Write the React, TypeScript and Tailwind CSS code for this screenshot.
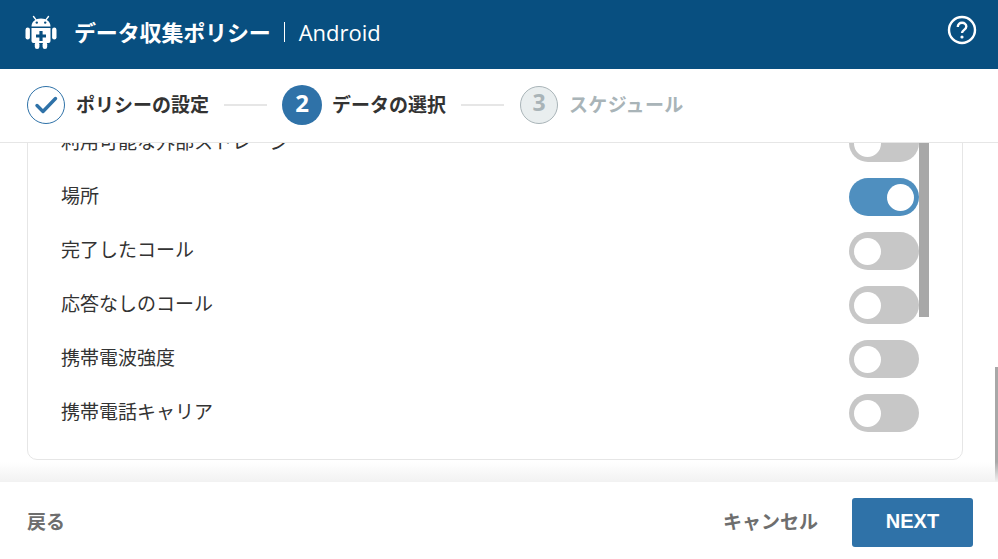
const jp = 'font-["Noto_Sans_CJK_JP","Open_Sans",sans-serif]'

const rows = [
  { label: '利用可能な外部ストレージ', on: false },
  { label: '場所', on: true },
  { label: '完了したコール', on: false },
  { label: '応答なしのコール', on: false },
  { label: '携帯電波強度', on: false },
  { label: '携帯電話キャリア', on: false },
]

const AndroidPlus = () => (
  <svg width="34" height="34" viewBox="0 0 34 34" fill="#fff" className="shrink-0">
    <path d="M9.5 1.5l2.4 3.2M24.5 1.5l-2.4 3.2" stroke="#fff" strokeWidth="1.4" strokeLinecap="round" />
    <path d="M7.5 11.5C7.5 6.5 11.5 3.5 17 3.5s9.5 3 9.5 8z" />
    <circle cx="12.8" cy="7.6" r="1.2" fill="#084f80" />
    <circle cx="21.2" cy="7.6" r="1.2" fill="#084f80" />
    <path
      fillRule="evenodd"
      d="M7.5 13h19v13a2 2 0 0 1-2 2h-15a2 2 0 0 1-2-2zM15.4 16v3.4H12v3.2h3.4V26h3.2v-3.4H22v-3.2h-3.4V16z"
    />
    <rect x="1.5" y="12.5" width="4.4" height="12" rx="2.2" />
    <rect x="28.1" y="12.5" width="4.4" height="12" rx="2.2" />
    <rect x="10.8" y="27" width="4.6" height="7" rx="2.3" />
    <rect x="18.6" y="27" width="4.6" height="7" rx="2.3" />
  </svg>
)

const Toggle = ({ on }: { on: boolean }) => (
  <div
    className={`flex h-[38px] w-[70px] items-center rounded-full px-[5px] ${
      on ? 'justify-end bg-[#4f8fbf]' : 'justify-start bg-[#c7c7c7]'
    }`}
  >
    <div className="h-[27px] w-[27px] rounded-full bg-white" />
  </div>
)

export default function App() {
  return (
    <div className={`flex h-[559px] w-[998px] flex-col overflow-hidden bg-white ${jp}`}>
      <header className="flex h-[69px] shrink-0 items-center justify-between bg-[#084f80] pb-[5px] pl-[24px] pr-[21px] text-white">
        <div className="flex items-center">
          <AndroidPlus />
          <span className="-mt-[3px] ml-[16px] text-[22px] font-bold leading-none tracking-[-0.15px]">データ収集ポリシー</span>
          <span className="ml-[13px] mr-[14px] h-[20px] w-px bg-white" />
          <span className='-mt-[1px] font-["Open_Sans",sans-serif] text-[22px] leading-none'>Android</span>
        </div>
        <svg width="30" height="30" viewBox="0 0 30 30" fill="none" stroke="#fff" className="mb-[5px]">
          <circle cx="15" cy="15" r="13" strokeWidth="2.4" />
          <path d="M10.8 12c0-2.6 1.9-4.2 4.3-4.2s4.2 1.5 4.2 3.7c0 3.4-4.3 3.3-4.3 6.6" strokeWidth="2.4" />
          <circle cx="15" cy="22" r="1.6" fill="#fff" stroke="none" />
        </svg>
      </header>

      <nav className="flex h-[74px] shrink-0 items-center border-b border-[#e6e6e6] pb-[2px] pl-[27px] text-[19px] font-bold leading-none">
        <div className="flex h-[38px] w-[38px] items-center justify-center rounded-full border border-[#2f72a8]">
          <svg width="24" height="20" viewBox="0 0 24 20" fill="none" stroke="#2f72a8" strokeWidth="3.4" strokeLinecap="round" strokeLinejoin="round">
            <path d="M3 10.5l6 6L21.5 3.5" />
          </svg>
        </div>
        <span className="-mt-[3px] ml-[11px] text-[#333]">ポリシーの設定</span>
        <span className="mx-[15px] h-[2px] w-[43px] bg-[#e6e6e6]" />
        <div className='flex h-[40px] w-[40px] items-center justify-center rounded-full bg-[#2f72a8] pb-[4px] font-["Open_Sans",sans-serif] text-[24px] text-white'>2</div>
        <span className="-mt-[3px] ml-[10px] text-[#333]">データの選択</span>
        <span className="mx-[15px] h-[2px] w-[43px] bg-[#e6e6e6]" />
        <div className='ml-px flex h-[38px] w-[38px] items-center justify-center rounded-full border border-[#a9b4b8] bg-[#e9eeef] pb-[4px] font-["Open_Sans",sans-serif] text-[23px] text-[#a9b4b8]'>3</div>
        <span className="-mt-[3px] ml-[11px] tracking-[0.3px] text-[#a9b4b8]">スケジュール</span>
      </nav>

      <main className="relative min-h-0 flex-1 overflow-hidden pl-[27px] pr-[35px]">
        <section className="relative -mt-[28px] rounded-b-[10px] border border-[#e6e6e6] pb-[19px] pl-[33px] pr-[43px]">
          {rows.map((r) => (
            <div key={r.label} className="flex h-[54px] items-center justify-between text-[19px] text-[#333]">
              <span className="-mt-[4px]">{r.label}</span>
              <Toggle on={r.on} />
            </div>
          ))}
        </section>
        <div className="absolute left-[919px] top-0 h-[174px] w-[10px] bg-[#a8a8a8]" />
        <div className="absolute right-0 top-[224px] h-[116px] w-[3px] bg-[#a8a8a8]" />
        <div className="absolute inset-x-0 bottom-0 h-[20px] bg-gradient-to-b from-transparent to-[#f2f2f2]" />
      </main>

      <footer className="flex h-[77px] shrink-0 items-center justify-between bg-white pl-[27px] pr-[25px] text-[19px] font-bold leading-none text-[#6e6e6e]">
        <span className="-mt-[1px]">戻る</span>
        <div className="flex items-center">
          <span className="-mt-[1px]">キャンセル</span>
          <button className='ml-[34px] mt-[4px] h-[49px] w-[121px] rounded-[3px] bg-[#2f72a8] pb-[3px] font-["Liberation_Sans",sans-serif] text-[20px] font-bold text-white'>
            NEXT
          </button>
        </div>
      </footer>
    </div>
  )
}
